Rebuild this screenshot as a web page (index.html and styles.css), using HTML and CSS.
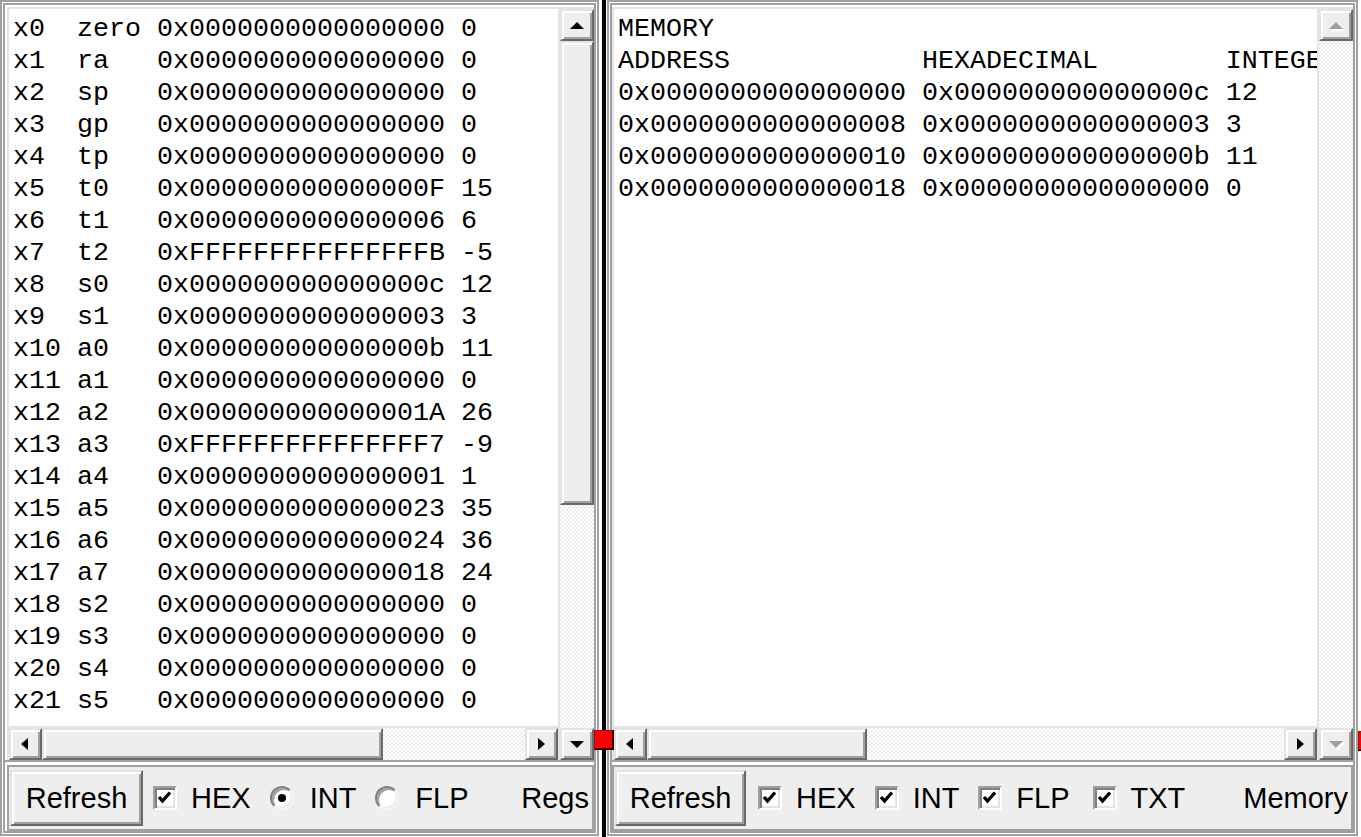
FILE: index.html
```html
<!DOCTYPE html>
<html lang="en">
<head>
<meta charset="utf-8">
<title>Registers / Memory</title>
<link rel="stylesheet" href="styles.css">
</head>
<body>
<div class="app">
  <section class="col col-left">
    <div class="scrollframe">
      <div class="sf-inner">
        <div class="vp-col">
<pre class="viewport">x0  zero 0x0000000000000000 0
x1  ra   0x0000000000000000 0
x2  sp   0x0000000000000000 0
x3  gp   0x0000000000000000 0
x4  tp   0x0000000000000000 0
x5  t0   0x000000000000000F 15
x6  t1   0x0000000000000006 6
x7  t2   0xFFFFFFFFFFFFFFFB -5
x8  s0   0x000000000000000c 12
x9  s1   0x0000000000000003 3
x10 a0   0x000000000000000b 11
x11 a1   0x0000000000000000 0
x12 a2   0x000000000000001A 26
x13 a3   0xFFFFFFFFFFFFFFF7 -9
x14 a4   0x0000000000000001 1
x15 a5   0x0000000000000023 35
x16 a6   0x0000000000000024 36
x17 a7   0x0000000000000018 24
x18 s2   0x0000000000000000 0
x19 s3   0x0000000000000000 0
x20 s4   0x0000000000000000 0
x21 s5   0x0000000000000000 0</pre>
          <div class="hbar">
            <div class="sbtn"><i class="arr arr-left"></i></div>
            <div class="thumb hthumb-regs"></div>
            <div class="track"></div>
            <div class="sbtn"><i class="arr arr-right"></i></div>
          </div>
        </div>
        <div class="vbar">
          <div class="sbtn"><i class="arr arr-up"></i></div>
          <div class="thumb vthumb-regs"></div>
          <div class="track"></div>
          <div class="sbtn"><i class="arr arr-down"></i></div>
        </div>
      </div>
    </div>
    <div class="toolbar">
      <button class="btn" type="button">Refresh</button>
      <label class="opt opt-first"><span class="check"><svg viewBox="0 0 20 20" width="20" height="20"><polyline points="4,9 7.5,13 15,4.5" fill="none" stroke="#000" stroke-width="3.4"/></svg></span>HEX</label>
      <label class="opt opt-radio"><span class="radio on"></span>INT</label>
      <label class="opt opt-radio"><span class="radio"></span>FLP</label>
      <span class="title">Regs</span>
    </div>
  </section>

  <div class="divider"><span class="rail"></span><span class="knob"></span></div>

  <section class="col col-right">
    <div class="scrollframe">
      <div class="sf-inner">
        <div class="vp-col">
<pre class="viewport">MEMORY
ADDRESS            HEXADECIMAL        INTEGER
0x0000000000000000 0x000000000000000c 12
0x0000000000000008 0x0000000000000003 3
0x0000000000000010 0x000000000000000b 11
0x0000000000000018 0x0000000000000000 0</pre>
          <div class="hbar">
            <div class="sbtn"><i class="arr arr-left"></i></div>
            <div class="thumb hthumb-mem"></div>
            <div class="track"></div>
            <div class="sbtn"><i class="arr arr-right"></i></div>
          </div>
        </div>
        <div class="vbar">
          <div class="sbtn dis"><i class="arr arr-up"></i></div>
          <div class="track"></div>
          <div class="sbtn dis"><i class="arr arr-down"></i></div>
        </div>
      </div>
    </div>
    <div class="toolbar">
      <button class="btn" type="button">Refresh</button>
      <label class="opt opt-first"><span class="check"><svg viewBox="0 0 20 20" width="20" height="20"><polyline points="4,9 7.5,13 15,4.5" fill="none" stroke="#000" stroke-width="3.4"/></svg></span>HEX</label>
      <label class="opt"><span class="check"><svg viewBox="0 0 20 20" width="20" height="20"><polyline points="4,9 7.5,13 15,4.5" fill="none" stroke="#000" stroke-width="3.4"/></svg></span>INT</label>
      <label class="opt"><span class="check"><svg viewBox="0 0 20 20" width="20" height="20"><polyline points="4,9 7.5,13 15,4.5" fill="none" stroke="#000" stroke-width="3.4"/></svg></span>FLP</label>
      <label class="opt opt-last"><span class="check"><svg viewBox="0 0 20 20" width="20" height="20"><polyline points="4,9 7.5,13 15,4.5" fill="none" stroke="#000" stroke-width="3.4"/></svg></span>TXT</label>
      <span class="title">Memory</span>
    </div>
  </section>

  <div class="divider divider-edge"><span class="knob"></span></div>
</div>
</body>
</html>
```

FILE: styles.css
```css
* { box-sizing: border-box; }

html, body {
  margin: 0;
  padding: 0;
  background: #fff;
}

body {
  width: 1361px;
  height: 837px;
  overflow: hidden;
  font-family: "Liberation Sans", Arial, sans-serif;
}

.app {
  display: flex;
  width: 1361px;
  height: 837px;
  overflow: hidden;
  background: #fff;
}

/* ---------- columns ---------- */
.col {
  flex: none;
  height: 836px;
  padding: 5px;
  display: flex;
  flex-direction: column;
  background: #fff;
  box-shadow: inset 0 0 0 2px #a0a0a0, inset 0 0 0 3px #fff, inset 0 0 0 5px #a0a0a0;
}

.col-left { width: 599px; }
.col-right { width: 751px; }

.scrollframe {
  flex: none;
  height: 757px;
  padding: 2px 0 0 2px;
  border-bottom: 2px solid #a0a0a0;
  background: #fff;
}

.col-right .scrollframe { padding-left: 0; }

.sf-inner {
  display: flex;
  height: 100%;
  border-top: 2px solid #e3e3e3;
  border-left: 2px solid #e3e3e3;
  background: #e3e3e3;
}

.vp-col {
  flex: 1;
  min-width: 0;
  display: flex;
  flex-direction: column;
}

.viewport {
  flex: 1;
  min-height: 0;
  margin: 0;
  padding: 4px 0 0 4px;
  overflow: hidden;
  white-space: pre;
  font-family: "Liberation Mono", "Courier New", monospace;
  font-size: 26.667px;
  line-height: 32px;
  color: #000;
  background: #fff;
  border-bottom: 2px solid #e3e3e3;
}

/* ---------- scrollbars ---------- */
.hbar {
  flex: none;
  height: 32px;
  display: flex;
}

.vbar {
  flex: none;
  width: 34px;
  margin-left: 2px;
  display: flex;
  flex-direction: column;
}

.sbtn, .thumb {
  flex: none;
  background: #eee;
  border: 2px solid;
  border-color: #e3e3e3 #696969 #696969 #e3e3e3;
  box-shadow: inset 2px 2px #fff, inset -2px -2px #a0a0a0;
}

.sbtn {
  display: flex;
  align-items: center;
  justify-content: center;
}

.hbar .sbtn { width: 33px; height: 32px; }
.vbar .sbtn { width: 34px; height: 32px; }

.hthumb-regs { width: 341px; }
.hthumb-mem { width: 220px; }
.vthumb-regs { height: 464px; }

.track {
  flex: 1;
  background-color: #fff;
  background-image: repeating-conic-gradient(#ececec 0 25%, #fff 0 50%);
  background-size: 4px 4px;
}

.arr {
  display: block;
  width: 0;
  height: 0;
  border: solid transparent;
}

.arr-up { border-width: 0 7px 7px; border-bottom-color: #000; }
.arr-down { border-width: 7px 7px 0; border-top-color: #000; }
.arr-left { border-width: 6px 7px 6px 0; border-right-color: #000; margin-right: 2px; }
.arr-right { border-width: 6px 0 6px 7px; border-left-color: #000; }

.dis .arr-up { border-bottom-color: #a0a0a0; filter: drop-shadow(2px 2px 0 #fff); }
.dis .arr-down { border-top-color: #a0a0a0; filter: drop-shadow(2px 2px 0 #fff); }

/* ---------- toolbar ---------- */
.toolbar {
  flex: none;
  height: 66px;
  margin: 3px 0 0 2px;
  padding: 1px 3px 1px 1px;
  border: 2px solid #a0a0a0;
  background: #eee;
  display: flex;
  align-items: center;
  font-size: 29px;
  color: #000;
}

.col-right .toolbar { margin-left: 0; }

.btn {
  flex: none;
  width: 133px;
  height: 56px;
  padding: 0;
  margin: 0;
  font-family: "Liberation Sans", Arial, sans-serif;
  font-size: 29px;
  color: #000;
  background: #eee;
  border: 2px solid;
  border-color: #e3e3e3 #696969 #696969 #e3e3e3;
  box-shadow: inset 2px 2px #fff, inset -2px -2px #a0a0a0;
}

.col-right .btn { width: 131px; }

.opt {
  display: flex;
  align-items: center;
  gap: 14px;
  margin-left: 19px;
  white-space: nowrap;
}

.opt-first { margin-left: 10px; }
.col-right .opt-first { margin-left: 12px; }
.opt-radio { gap: 16px; }
.opt-last { margin-left: 23px; }

.check {
  flex: none;
  width: 24px;
  height: 24px;
  background: #fff;
  border: 2px solid;
  border-color: #a0a0a0 #fff #fff #a0a0a0;
  box-shadow: inset 2px 2px #808080, inset -2px -2px #e3e3e3;
  display: flex;
  align-items: center;
  justify-content: center;
}

.check svg { display: block; }

.radio {
  flex: none;
  position: relative;
  width: 24px;
  height: 24px;
  border-radius: 50%;
  background: #fff;
  border: 2px solid;
  border-color: #808080 #f4f4f4 #f4f4f4 #808080;
  box-shadow: inset 2px 2px #a0a0a0, inset -1px -1px #e3e3e3;
}

.radio.on::after {
  content: "";
  position: absolute;
  left: 6px;
  top: 6px;
  width: 8px;
  height: 8px;
  border-radius: 50%;
  background: #000;
}

.title {
  margin-left: auto;
  white-space: nowrap;
}

/* ---------- dividers ---------- */
.divider {
  flex: none;
  position: relative;
  width: 8px;
  height: 837px;
  padding-left: 3px;
  background: #fff;
}

.rail {
  display: block;
  width: 4px;
  height: 100%;
  background: #000;
}

.knob {
  position: absolute;
  left: -5px;
  top: 730px;
  width: 20px;
  height: 20px;
  background: #f00;
  border-top: 1px solid #c00000;
  border-left: 1px solid #c00000;
  border-right: 2px solid #200000;
  border-bottom: 2px solid #200000;
}

.divider-edge {
  width: 3px;
  padding-left: 0;
}

.divider-edge .knob { left: 0; top: 731px; }
```
